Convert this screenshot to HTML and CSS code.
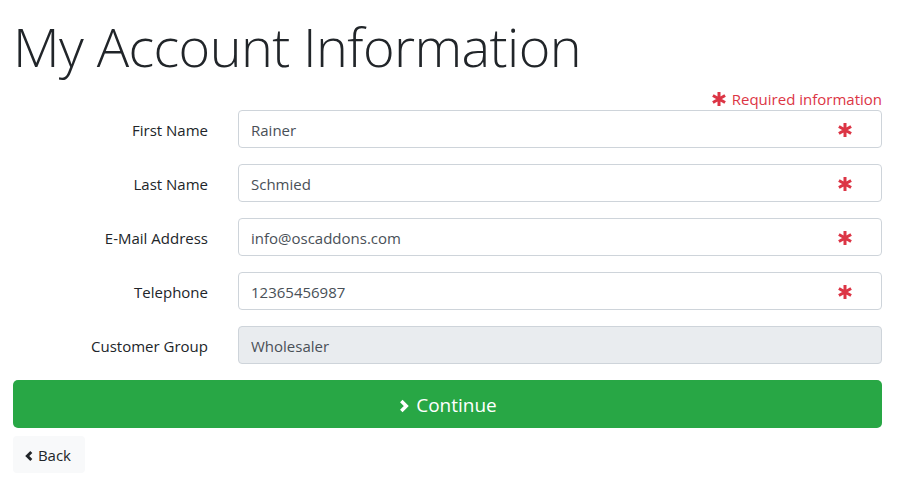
FILE: index.html
```html
<!DOCTYPE html>
<html lang="en">
<head>
    <meta charset="UTF-8">
    <meta name="viewport" content="width=device-width, initial-scale=1.0">
    <title>My Account Information</title>
    <link rel="stylesheet" href="styles.css">
</head>
<body>
    <div class="page">
        <h1>My Account Information</h1>
        <div class="required-note">
            <svg class="ast" viewBox="0 0 16 16"><path d="M8 1v14M1.9 4.5l12.2 7M14.1 4.5l-12.2 7"/></svg>
            Required information
        </div>
        <form class="account-form">
            <div class="form-row">
                <label for="firstname">First Name</label>
                <div class="field">
                    <input type="text" id="firstname" value="Rainer">
                    <svg class="ast field-ast" viewBox="0 0 16 16"><path d="M8 1v14M1.9 4.5l12.2 7M14.1 4.5l-12.2 7"/></svg>
                </div>
            </div>
            <div class="form-row">
                <label for="lastname">Last Name</label>
                <div class="field">
                    <input type="text" id="lastname" value="Schmied">
                    <svg class="ast field-ast" viewBox="0 0 16 16"><path d="M8 1v14M1.9 4.5l12.2 7M14.1 4.5l-12.2 7"/></svg>
                </div>
            </div>
            <div class="form-row">
                <label for="email">E-Mail Address</label>
                <div class="field">
                    <input type="text" id="email" value="info@oscaddons.com">
                    <svg class="ast field-ast" viewBox="0 0 16 16"><path d="M8 1v14M1.9 4.5l12.2 7M14.1 4.5l-12.2 7"/></svg>
                </div>
            </div>
            <div class="form-row">
                <label for="telephone">Telephone</label>
                <div class="field">
                    <input type="text" id="telephone" value="12365456987">
                    <svg class="ast field-ast" viewBox="0 0 16 16"><path d="M8 1v14M1.9 4.5l12.2 7M14.1 4.5l-12.2 7"/></svg>
                </div>
            </div>
            <div class="form-row">
                <label for="group">Customer Group</label>
                <div class="field">
                    <input type="text" id="group" value="Wholesaler" readonly>
                </div>
            </div>
            <button type="submit" class="btn-continue">
                <svg class="chev" viewBox="0 0 10 12"><path d="M3 1.5l4.5 4.5L3 10.5"/></svg>
                Continue
            </button>
            <a href="#" class="btn-back">
                <svg class="chev" viewBox="0 0 10 12"><path d="M7 1.5L2.5 6 7 10.5"/></svg>
                Back
            </a>
        </form>
    </div>
</body>
</html>
```

FILE: styles.css
```css
body {
    font-family: "Open Sans", "Noto Sans", sans-serif;
    font-size: 15px;
    color: #212529;
    background: #fff;
    margin: 0;
}
.page {
    padding: 13px 20px 0 13px;
}
h1 {
    font-size: 54px;
    font-weight: 300;
    line-height: 67px;
    letter-spacing: -0.6px;
    margin: 0 0 6px 0;
}
.required-note {
    color: #dc3545;
    text-align: right;
    line-height: 24px;
    font-size: 15px;
    padding-top: 1px;
    height: 23px;
}
.required-note .ast {
    width: 16px;
    height: 16px;
    vertical-align: -2px;
    margin-right: 1px;
}
.ast path {
    fill: none;
    stroke: #dc3545;
    stroke-width: 3;
}
.form-row {
    display: grid;
    grid-template-columns: 210px 1fr;
    align-items: center;
    margin-bottom: 16px;
}
label {
    text-align: right;
    padding-right: 15px;
    padding-top: 2px;
}
.field {
    position: relative;
    padding-left: 15px;
}
input[type="text"] {
    display: block;
    width: 100%;
    height: 38px;
    padding: 7px 12px 5px 12px;
    font-family: inherit;
    font-size: 15px;
    color: #495057;
    border: 1px solid #ced4da;
    border-radius: 4px;
    box-sizing: border-box;
    background: #fff;
}
input[readonly] {
    background-color: #e9ecef;
}
.field-ast {
    position: absolute;
    right: 29px;
    top: 12px;
    width: 16px;
    height: 16px;
}
.btn-continue {
    display: block;
    width: 100%;
    height: 48px;
    padding-top: 3px;
    background-color: #28a745;
    color: #fff;
    font-family: inherit;
    font-size: 19px;
    border: none;
    border-radius: 5px;
    cursor: pointer;
}
.btn-continue .chev {
    width: 11px;
    height: 14px;
    margin-right: 2px;
    vertical-align: -1px;
}
.chev path {
    fill: none;
    stroke: currentColor;
    stroke-width: 3.2;
}
.btn-back {
    display: inline-block;
    margin-top: 8px;
    padding: 7px 14px 6px 12px;
    line-height: 24px;
    background-color: #f8f9fa;
    color: #212529;
    border-radius: 4px;
    text-decoration: none;
}
.btn-back .chev {
    width: 9px;
    height: 12px;
    vertical-align: -1px;
}
```
